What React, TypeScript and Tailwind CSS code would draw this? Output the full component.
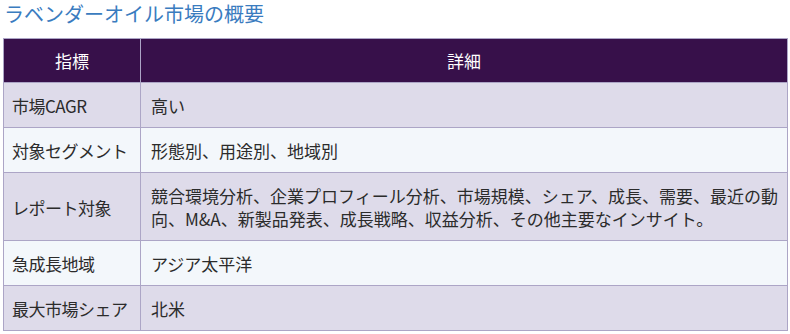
const rows: { label: string; value: string }[] = [
  { label: '市場CAGR', value: '高い' },
  { label: '対象セグメント', value: '形態別、用途別、地域別' },
  {
    label: 'レポート対象',
    value:
      '競合環境分析、企業プロフィール分析、市場規模、シェア、成長、需要、最近の動向、M&A、新製品発表、成長戦略、収益分析、その他主要なインサイト。',
  },
  { label: '急成長地域', value: 'アジア太平洋' },
  { label: '最大市場シェア', value: '北米' },
]

export default function App() {
  return (
    <div className="w-[790px] h-[334px] bg-white px-[3px] font-['Noto_Sans_CJK_JP','Noto_Sans',sans-serif]">
      <h2 className="text-[20px] leading-[28px] text-[#3a7cbf] pl-[1px] mb-[10px]">ラベンダーオイル市場の概要</h2>
      <table className="w-[785px] border-collapse text-[17px] leading-[23px] text-[#2b2b2b]">
        <thead>
          <tr className="bg-[#37104a] text-white">
            <th className="w-[137px] border border-[#aca5c6] font-normal py-[10px] text-center">指標</th>
            <th className="border border-[#aca5c6] font-normal py-[10px] text-center">詳細</th>
          </tr>
        </thead>
        <tbody>
          {rows.map((r, i) => (
            <tr key={i} className={i % 2 === 0 ? 'bg-[#dedbea]' : 'bg-[#f3f7fb]'}>
              <td className="border border-[#aca5c6] px-[8px] pt-[11px] pb-[10px] whitespace-nowrap tracking-[-0.5px]">{r.label}</td>
              <td className="border border-[#aca5c6] pl-[10px] pr-[6px] pt-[11px] pb-[10px]">{r.value}</td>
            </tr>
          ))}
        </tbody>
      </table>
    </div>
  )
}
